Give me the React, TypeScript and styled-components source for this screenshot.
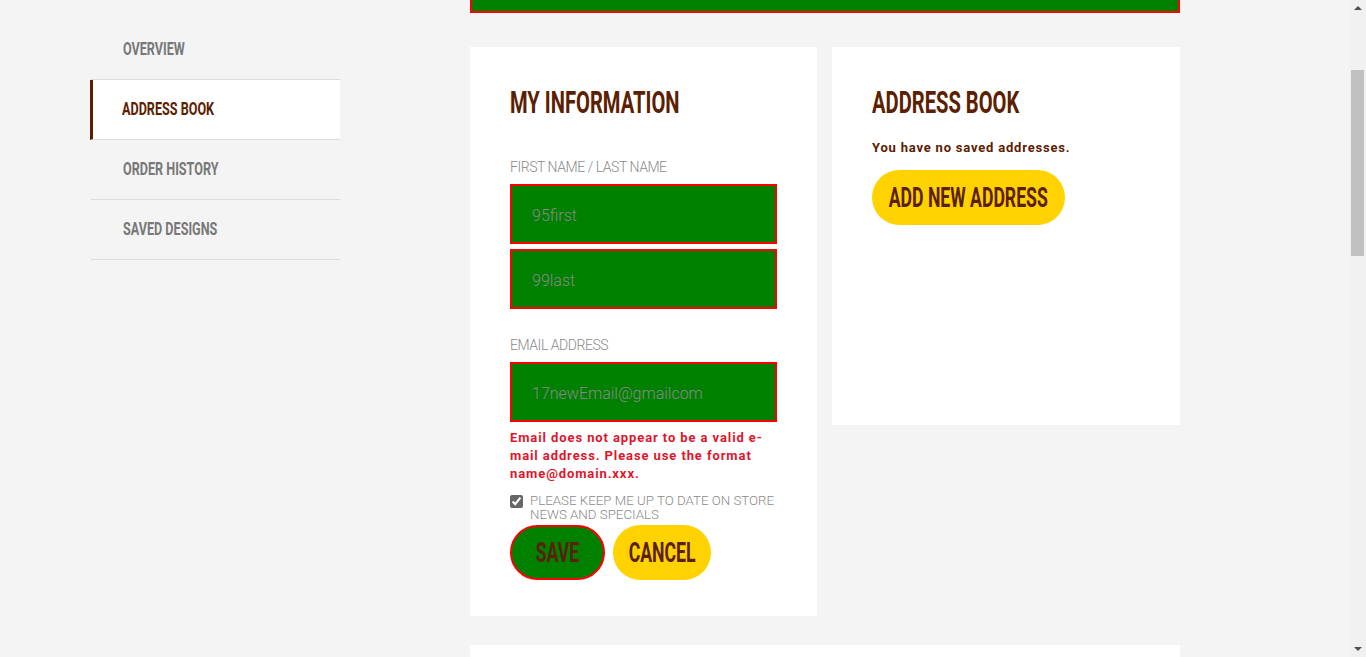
import { useLayoutEffect } from "react";
import styled, { createGlobalStyle } from "styled-components";

const BROWN = "#5b2000";
const YELLOW = "#ffd200";
const GREY = "#8a8a8a";

const GlobalStyle = createGlobalStyle`
  html {
    overflow-y: scroll;
  }
  body {
    margin: 0;
    background: #f4f4f4;
    font-family: Roboto, "Liberation Sans", sans-serif;
  }
`;

// no condensed face is installed, so bold Roboto is squeezed to DIN-ish widths
const Squeeze = styled.span<{ $k: number; $origin?: string }>`
  display: inline-block;
  white-space: nowrap;
  transform: scaleX(${({ $k }) => $k});
  transform-origin: ${({ $origin }) => $origin || "left"} center;
`;

const Page = styled.div`
  display: grid;
  grid-template-columns: 249px 710px;
  column-gap: 130px;
  padding: 100px 0 0 91px;
  min-height: 2200px;
  box-sizing: border-box;
`;

const Sidebar = styled.nav`
  display: flex;
  flex-direction: column;
  margin-top: 117px;
`;

const NavItem = styled.a<{ $active?: boolean }>`
  display: flex;
  align-items: center;
  height: 60px;
  padding: 0 0 2px ${({ $active }) => ($active ? "29px" : "32px")};
  font-size: 18px;
  font-weight: 700;
  color: ${({ $active }) => ($active ? BROWN : "#787878")};
  background: ${({ $active }) => ($active ? "#fff" : "transparent")};
  border-bottom: 1px solid #dcdcdc;
  border-left: ${({ $active }) => ($active ? `3px solid ${BROWN}` : "none")};
  margin-left: ${({ $active }) => ($active ? "-1px" : "0")};
  box-sizing: border-box;
  text-decoration: none;
  cursor: pointer;
`;

const Main = styled.main`
  display: flex;
  flex-direction: column;
`;

const Banner = styled.div`
  display: flex;
  align-items: flex-end;
  height: 110px;
  box-sizing: border-box;
  padding: 0 0 9px 4px;
  background: #008000;
  border: 2px solid #ff0000;
`;

const BannerTitle = styled.h1`
  margin: 0;
  font-size: 60px;
  font-weight: 700;
  line-height: 1;
  color: ${BROWN};
`;

const Cards = styled.div`
  display: grid;
  grid-template-columns: 347px 348px;
  column-gap: 15px;
  align-items: start;
  margin-top: 34px;
`;

const Card = styled.section<{ $height: number }>`
  display: flex;
  flex-direction: column;
  align-items: flex-start;
  background: #fff;
  padding: 40px 40px 36px;
  box-sizing: border-box;
  min-height: ${({ $height }) => $height}px;
`;

const Heading = styled.h2`
  margin: -1px 0 1px;
  font-size: 32px;
  font-weight: 700;
  line-height: 32px;
  color: ${BROWN};
`;

const Field = styled.div<{ $top: number }>`
  margin-top: ${({ $top }) => $top}px;
  display: flex;
  flex-direction: column;
`;

const Label = styled.label`
  display: block;
  font-size: 14px;
  font-weight: 300;
  line-height: 16px;
  letter-spacing: -0.45px;
  color: ${GREY};
  text-transform: uppercase;
  margin: 0 0 9px;
`;

const Input = styled.input`
  width: 267px;
  height: 60px;
  box-sizing: border-box;
  background: #008000;
  border: 2px solid #ff0000;
  padding: 3px 20px 0;
  font-family: Roboto, sans-serif;
  font-size: 16px;
  font-weight: 300;
  color: ${GREY};
  outline: none;
  & + & {
    margin-top: 5px;
  }
`;

const Error = styled.p`
  margin: 7px 0 0;
  width: 267px;
  font-size: 13px;
  font-weight: 700;
  line-height: 18px;
  letter-spacing: 0.9px;
  color: #e0142b;
`;

const CheckRow = styled.label`
  display: flex;
  align-items: flex-start;
  gap: 7px;
  width: 267px;
  margin-top: 11px;
  font-size: 13.3px;
  font-weight: 300;
  line-height: 14px;
  color: ${GREY};
  text-transform: uppercase;
`;

const Check = styled.input`
  margin: 1px 0 0;
  width: 13px;
  height: 13px;
  flex: none;
  accent-color: #666;
`;

const Actions = styled.div`
  display: flex;
  align-items: center;
  gap: 8px;
  margin-top: 3px;
`;

const Pill = styled.button<{ $width: number; $save?: boolean }>`
  display: flex;
  align-items: center;
  justify-content: center;
  width: ${({ $width }) => $width}px;
  height: 55px;
  padding: 0;
  border-radius: 28px;
  font-family: Roboto, sans-serif;
  font-size: 28px;
  font-weight: 700;
  color: ${BROWN};
  background: ${({ $save }) => ($save ? "#008000" : YELLOW)};
  border: ${({ $save }) => ($save ? "2px solid #ff0000" : "none")};
  cursor: pointer;
`;

const Note = styled.p`
  margin: 20px 0 13px;
  font-size: 13px;
  font-weight: 700;
  line-height: 18px;
  letter-spacing: 0.8px;
  color: ${BROWN};
`;

const BottomCard = styled.section`
  margin-top: 29px;
  background: #fff;
  height: 420px;
`;

const ScrollTrack = styled.div`
  position: fixed;
  top: 0;
  right: 0;
  bottom: 0;
  width: 17px;
  background: #f1f1f1;
  display: flex;
  flex-direction: column;
  align-items: center;
  justify-content: space-between;
  padding: 6px 0;
  box-sizing: border-box;
`;

const Arrow = styled.span<{ $down?: boolean }>`
  width: 0;
  height: 0;
  border-left: 4px solid transparent;
  border-right: 4px solid transparent;
  ${({ $down }) =>
    $down ? "border-top: 4px solid #505050;" : "border-bottom: 4px solid #505050;"}
`;

const Thumb = styled.span`
  position: absolute;
  top: 70px;
  left: 2px;
  width: 13px;
  height: 186px;
  background: #c1c1c1;
`;

export default function App() {
  useLayoutEffect(() => {
    window.scrollTo(0, 197);
  }, []);

  return (
    <>
      <GlobalStyle />
      <Page>
        <Sidebar>
          <NavItem>
            <Squeeze $k={0.7}>OVERVIEW</Squeeze>
          </NavItem>
          <NavItem $active>
            <Squeeze $k={0.7}>ADDRESS BOOK</Squeeze>
          </NavItem>
          <NavItem>
            <Squeeze $k={0.7}>ORDER HISTORY</Squeeze>
          </NavItem>
          <NavItem>
            <Squeeze $k={0.7}>SAVED DESIGNS</Squeeze>
          </NavItem>
        </Sidebar>
        <Main>
          <Banner>
            <BannerTitle>
              <Squeeze $k={0.63}>MY ACCOUNT</Squeeze>
            </BannerTitle>
          </Banner>
          <Cards>
            <Card $height={569}>
              <Heading>
                <Squeeze $k={0.63}>MY INFORMATION</Squeeze>
              </Heading>
              <Field $top={40}>
                <Label>First Name / Last Name</Label>
                <Input defaultValue="95first" />
                <Input defaultValue="99last" />
              </Field>
              <Field $top={28}>
                <Label>Email Address</Label>
                <Input defaultValue="17newEmail@gmailcom" />
                <Error>
                  Email does not appear to be a valid e-mail address. Please use
                  the format name@domain.xxx.
                </Error>
              </Field>
              <CheckRow>
                <Check type="checkbox" defaultChecked />
                Please keep me up to date on store news and specials
              </CheckRow>
              <Actions>
                <Pill $save $width={95}>
                  <Squeeze $k={0.63} $origin="center">SAVE</Squeeze>
                </Pill>
                <Pill $width={98}>
                  <Squeeze $k={0.63} $origin="center">CANCEL</Squeeze>
                </Pill>
              </Actions>
            </Card>
            <Card $height={378}>
              <Heading>
                <Squeeze $k={0.63}>ADDRESS BOOK</Squeeze>
              </Heading>
              <Note>You have no saved addresses.</Note>
              <Pill $width={193}>
                <Squeeze $k={0.63} $origin="center">ADD NEW ADDRESS</Squeeze>
              </Pill>
            </Card>
          </Cards>
          <BottomCard />
        </Main>
      </Page>
      <ScrollTrack>
        <Arrow />
        <Thumb />
        <Arrow $down />
      </ScrollTrack>
    </>
  );
}
